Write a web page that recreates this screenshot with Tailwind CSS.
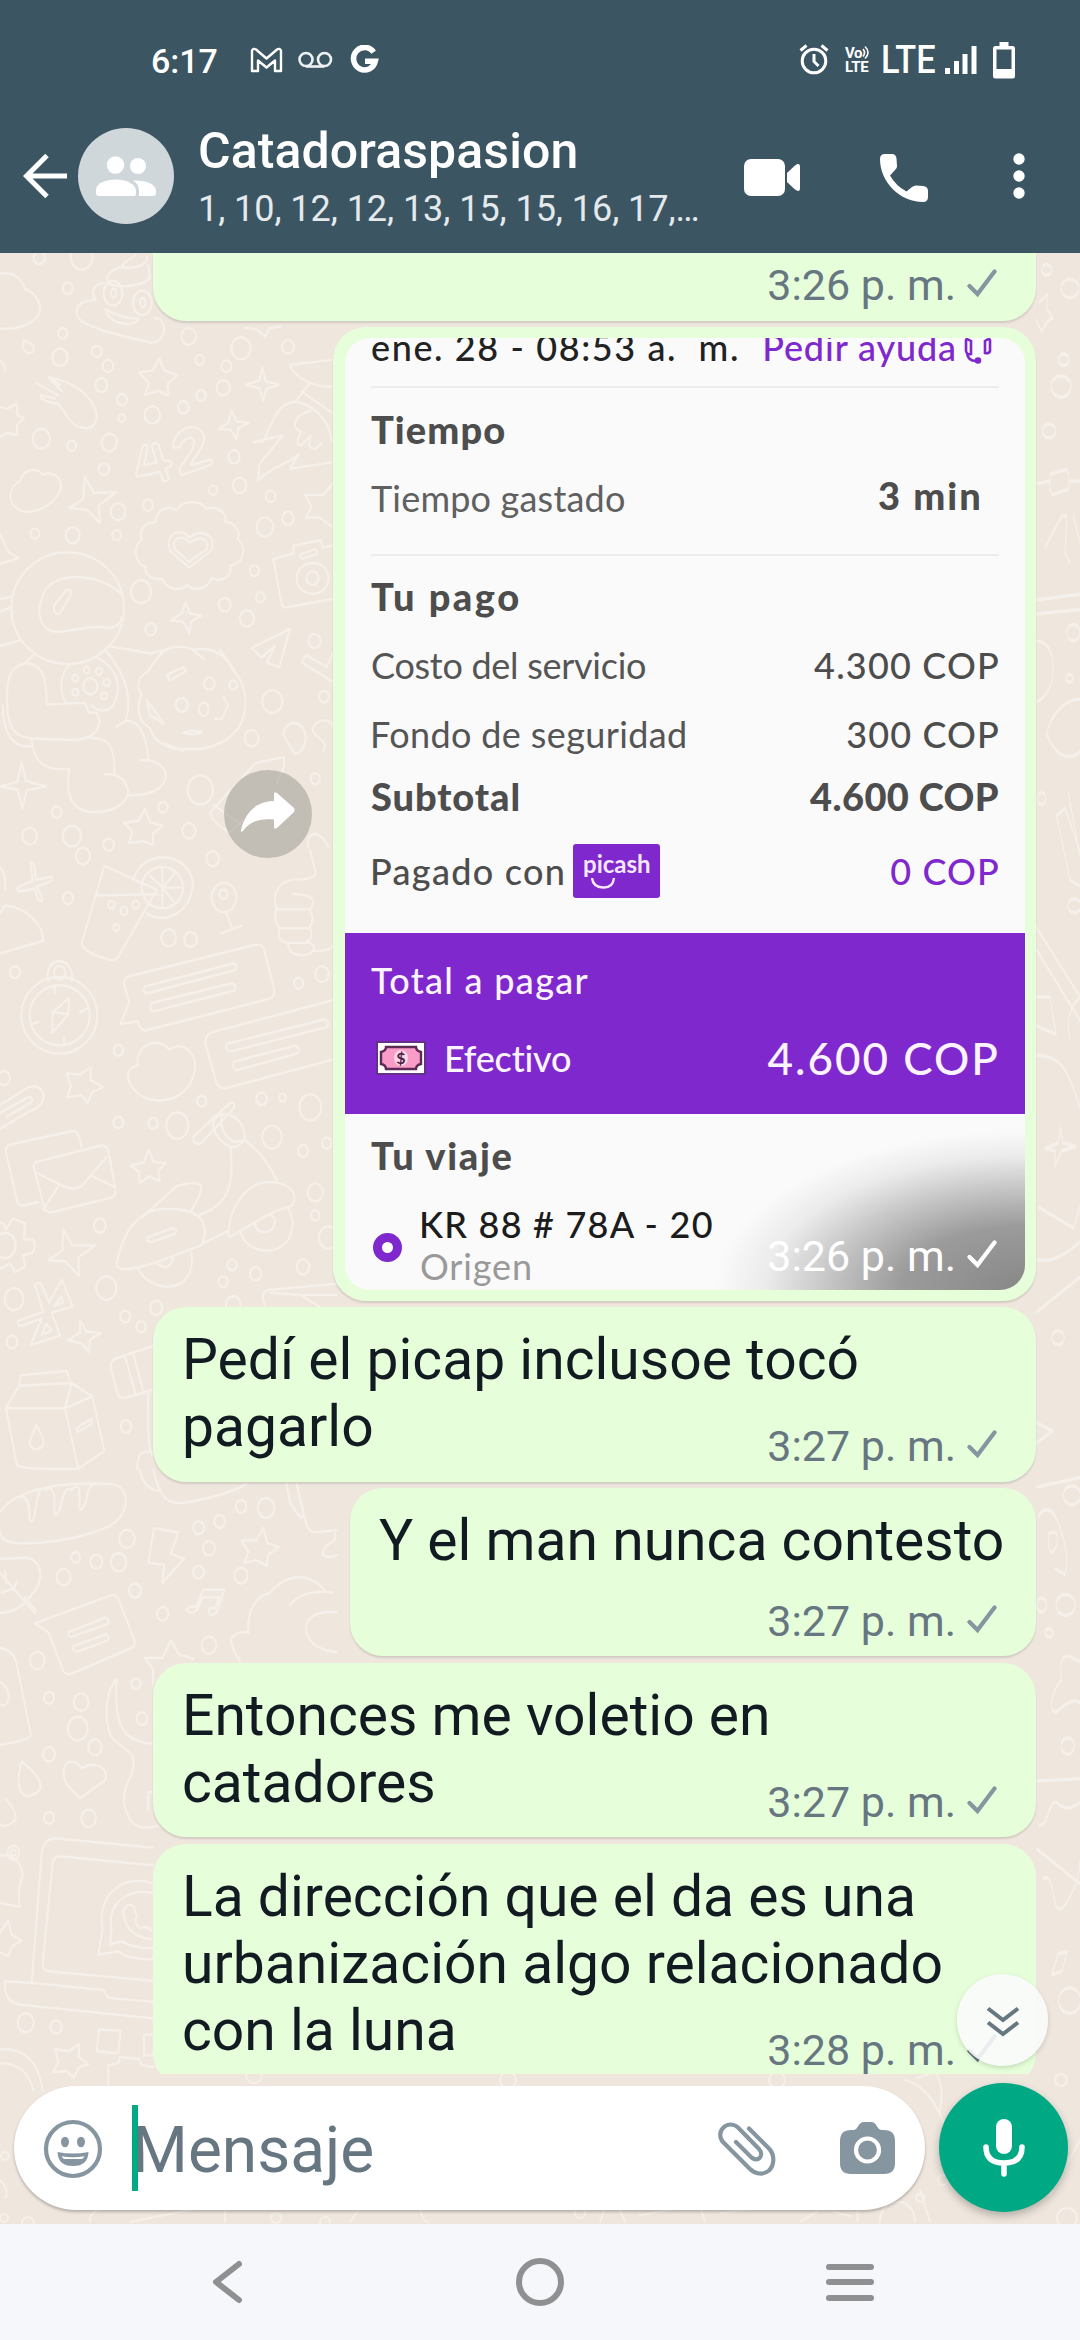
<!DOCTYPE html>
<html lang="es">
<head>
<meta charset="utf-8">
<title>Catadoraspasion</title>
<script src="https://cdn.jsdelivr.net/npm/@tailwindcss/browser@4"></script>
</head>
<body class="w-[1080px] h-[2340px] overflow-hidden bg-[#efe7de] font-[Roboto,sans-serif]">
<svg width="0" height="0" class="absolute">
  <defs>
    <symbol id="check" viewBox="0 0 30 30"><path d="M2.500 18 L10.500 26 L27.500 3.500" fill="none" stroke="currentColor" stroke-width="4.200" stroke-linecap="round"/></symbol>
  </defs>
</svg>
<div class="flex flex-col w-[1080px] h-[2340px]">

  <!-- header -->
  <header class="h-[253px] shrink-0 bg-[#3b5563] text-white">
    <div class="flex items-center h-[122px]">
      <span class="ml-[151px] w-[99px] text-[34px] font-medium leading-none">6:17</span>
      <svg class="w-[33px] h-[26px] mt-[-3px]" viewBox="0 0 33 26" fill="none" stroke="#fff" stroke-width="2.400" stroke-linejoin="round"><path d="M2 24V3.500Q3.500 .800 6 2.500L16.500 11.500 27 2.500Q29.500 .800 31 3.500V24H25V13.500L16.500 20.500 8 13.500V24Z"/></svg>
      <svg class="ml-[15px] w-[35px] h-[18px] mt-[-3px]" viewBox="0 0 35 18" fill="none" stroke="#eef1f3" stroke-width="2.600"><circle cx="8" cy="8.500" r="6.500"/><circle cx="26.500" cy="8.500" r="6.500"/><path d="M8 15.500H26.500"/></svg>
      <svg class="ml-[17px] w-[29px] h-[30px] mt-[-2px]" viewBox="0 0 29 30" fill="none" stroke="#fff" stroke-width="5.600"><path d="M23.600 7.200A11 11.300 0 1 0 25.300 16.200H15"/></svg>
      <div class="flex items-center ml-auto mr-[65px]">
        <svg class="w-[30px] h-[32px] mt-[-4px]" viewBox="0 0 30 32" fill="none" stroke="#fff" stroke-width="3"><circle cx="15" cy="18" r="11.800"/><path d="M15 11V18.500L19.500 23M1.500 7.500L7.500 2.500M28.500 7.500L22.500 2.500"/></svg>
        <div class="flex flex-col ml-[16px] w-[28px] mt-[-3px] font-bold text-[15px] leading-[14px]">
          <span class="flex items-center"><span class="tracking-[-0.500px]">Vo</span><svg class="w-[9px] h-[15px]" viewBox="0 0 9 15" fill="none" stroke="#fff" stroke-width="1.600"><path d="M1 4Q4 7.500 1 11.500M3 1.500Q9 7.500 3 13.500"/></svg></span>
          <span class="tracking-[-0.200px]">LTE</span>
        </div>
        <div class="ml-[8px] w-[64px] mt-[-2px]"><span class="inline-block origin-left scale-x-[0.88] text-[39px] leading-[39px] font-medium">LTE</span></div>
        <svg class="w-[32px] h-[28px] mt-[-2px]" viewBox="0 0 32 28" fill="#fff"><path d="M0 22h5v6H0zM9 15h5v13H9zM17.500 8h5v20h-5zM26.500 0h5v28h-5z"/></svg>
        <svg class="ml-[16px] w-[22px] h-[37px] mt-[-2px]" viewBox="0 0 22 37"><path d="M6.500 0h9v4H19.500Q22 4 22 6.500V34Q22 36.500 19.500 36.500H2.500Q0 36.500 0 34V6.500Q0 4 2.500 4H6.500ZM3.500 7.500V27H18.500V7.500Z" fill="#fff" fill-rule="evenodd"/></svg>
      </div>
    </div>
    <div class="flex items-center h-[131px] pb-[23px]">
      <svg class="ml-[23px] w-[45px] h-[46px]" viewBox="0 0 45 46" fill="none" stroke="#fff" stroke-width="5"><path d="M24 2.500L3.500 23 24 43.500M3.500 23H44"/></svg>
      <div class="ml-[10px] w-[96px] h-[96px] rounded-full bg-[#d0d7db] flex items-center justify-center">
        <svg class="w-[60px] h-[40px]" viewBox="0 0 60 40" fill="#fff"><circle cx="19.500" cy="9" r="8.700"/><circle cx="42" cy="10" r="8"/><path d="M0 34C0 27 10 23.500 20 23.500S40 28 40 35V38Q40 40 38 40H3Q0 40 0 37Z"/><path d="M37 24.500C50 24 60 28 60 34.500V37Q60 40 57 40H43V35Q43 28 37 24.500Z"/></svg>
      </div>
      <div class="ml-[24px] mt-[6px] w-[546px] flex flex-col whitespace-nowrap">
        <span class="text-[50px] font-medium leading-[60px] tracking-[0.100px]">Catadoraspasion</span>
        <span class="text-[36px] leading-[56px] text-[#e4e9ec] tracking-[-0.050px]">1, 10, 12, 12, 13, 15, 15, 16, 17,…</span>
      </div>
      <svg class="w-[56px] h-[37px] mt-[2px]" viewBox="0 0 56 37" fill="#fff"><rect width="41" height="37" rx="7"/><path d="M43 14L51 6.500Q56 3 56 8V29Q56 34 51 30.500L43 23Z"/></svg>
      <svg class="ml-[80px] w-[48px] h-[48px] mt-[4px]" viewBox="0 0 48 48" fill="#fff"><path d="M5 0H12Q16 0 16.500 4.500L17 12Q17 14 15.500 15.500L10 21.500Q16 32 26.500 37.500L32 33Q34 31.500 36 31.500L43 32Q48 32.500 48 37V43Q48 48 43 48C20 48 0 28 0 5Q0 0 5 0Z"/></svg>
      <svg class="ml-[85px] w-[12px] h-[46px]" viewBox="0 0 12 46" fill="#fff"><circle cx="6" cy="6" r="5.700"/><circle cx="6" cy="23" r="5.700"/><circle cx="6" cy="40" r="5.700"/></svg>
    </div>
  </header>

  <!-- chat -->
  <main class="relative h-[1971px] shrink-0 overflow-hidden">
    <!-- wallpaper doodles -->
    <svg class="absolute left-0 top-0 w-[1080px] h-[1971px]" viewBox="0 253 1080 1971" fill="none" stroke="#f6f0ea" stroke-width="2" stroke-linejoin="round" stroke-linecap="round">
      <g transform="translate(0,250) scale(.3333,.38265)" stroke-width="6">
        <path d="M0 62C40 55 65 75 75 102C110 110 130 150 115 170C95 195 50 210 0 205M0 290Q18 300 14 318"/>
        <path d="M365 45C370 25 400 25 405 12M365 45C400 50 450 40 440 15M365 45C330 50 315 70 325 88C355 100 440 95 450 70L445 40M312 86C280 90 270 110 287 132C240 130 225 150 232 172C245 205 400 230 450 242C490 245 505 200 480 180L465 178M316 155C345 170 380 180 416 180C410 200 330 200 316 155Z"/>
        <ellipse cx="339" cy="113" rx="28" ry="32"/><ellipse cx="427" cy="138" rx="28" ry="32"/><ellipse cx="341" cy="113" rx="8" ry="12"/><ellipse cx="428" cy="137" rx="8" ry="12"/>
        <path d="M70 236Q110 245 99 266Q82 276 70 258Z"/>
        <path d="M145 332C230 345 290 390 290 440C280 480 235 465 215 450L175 402Q120 395 122 380L165 388M145 332L185 368M110 348L175 380M145 332L180 352"/>
        <path d="M478 283L493 315 532 327 503 350 505 380 475 368 435 378 447 348 417 320 458 315ZM0 410L20 415 50 402 52 432 72 440 50 458 52 483 20 478 0 488M735 203L770 207 795 228 808 205 842 200"/>
        <path d="M787 308L797 343 838 352 800 362 789 394 779 362 737 352 777 342ZM695 420L710 448 745 452 715 465 710 494 692 470 655 468 685 452ZM254 592L282 635 348 633 296 668 300 714 262 680 208 674 250 650Z"/>
        <path d="M428 512Q440 505 443 515L432 562 470 555 455 510Q465 500 475 508L490 550 515 552Q520 565 496 572L507 598Q500 608 490 603L480 580 415 592Q405 592 410 580ZM520 517C515 470 590 440 612 485C618 515 580 540 572 562L630 548Q645 552 632 562L545 588Q538 585 540 570C560 540 585 520 583 500C575 480 545 495 540 515Z"/>
        <path d="M60 605C65 575 110 565 127 587C170 575 190 605 180 630C160 670 90 700 50 675C20 655 30 615 60 605Z"/>
        <path d="M468 712C465 680 505 665 530 680C550 650 605 655 620 677C650 665 685 690 675 710C705 710 725 740 712 755C740 775 735 820 690 825C700 855 660 870 635 857C625 885 580 895 563 875C540 895 495 885 487 858C465 865 430 850 438 828C400 820 400 770 425 757C415 725 440 710 468 712Z"/>
        <path d="M567 830L512 788C490 745 540 720 570 752C600 725 655 745 632 787ZM567 815L525 782C510 755 545 740 570 765C600 745 630 755 620 782Z"/>
        <path d="M870 300L998 287M870 300C880 330 940 360 998 357M930 347L885 397C840 400 825 430 790 500L760 502L848 485L778 560L775 602C820 560 870 560 897 532L870 572L995 555M885 397C930 400 990 440 995 500M905 370L995 425M930 420C880 435 870 465 905 475Q880 510 905 510L932 485Q920 520 945 520L965 505"/>
        <path d="M998 610L970 640 915 640 935 672 917 700 955 698 995 722M820 808L882 792 880 773 962 758 970 778 998 772M820 808L845 925Q848 935 860 934L998 912M902 795L945 782Q955 785 950 795L910 806Q900 806 902 795Z"/><ellipse cx="938" cy="858" rx="48" ry="40"/><circle cx="938" cy="858" r="18"/>
        <ellipse cx="203" cy="936" rx="169" ry="146"/>
        <path d="M365 900C300 840 150 840 130 900C105 950 120 1000 180 998C250 990 280 980 330 988Q365 980 363 960M200 888Q220 885 210 905L180 950Q160 955 162 930Z"/>
        <path d="M100 1058L75 1080C15 1090 20 1150 22 1200C30 1290 80 1275 220 1280C290 1280 310 1240 290 1210L265 1208 255 1183 140 1188C140 1120 130 1080 75 1080M0 1035L60 1020M315 1045C370 1100 400 1160 378 1230L350 1246M328 1035L450 1054 500 1045M8 1190Q10 1300 90 1298M95 1280C100 1350 150 1360 208 1357C190 1450 240 1475 300 1468C360 1465 395 1430 380 1400C370 1380 350 1368 315 1370M343 1368C345 1290 320 1275 270 1275M378 1230C430 1230 440 1290 445 1330M420 1333C480 1330 505 1360 495 1385C480 1420 430 1425 386 1425"/>
        <path d="M208 1085C170 1120 185 1170 200 1185M290 1065C350 1090 370 1140 340 1190C320 1210 290 1205 275 1190"/><circle cx="271" cy="1140" r="21"/><circle cx="226" cy="1119" r="9"/><circle cx="260" cy="1097" r="9"/><circle cx="297" cy="1101" r="9"/><circle cx="320" cy="1130" r="9"/><circle cx="312" cy="1165" r="9"/><circle cx="226" cy="1156" r="9"/>
        <path d="M480 1058C500 1030 560 1035 580 1045C640 1035 680 1060 700 1100C740 1130 750 1200 715 1250C680 1290 620 1310 560 1303C500 1310 460 1280 450 1250C410 1230 410 1190 425 1160C405 1140 420 1110 440 1105ZM500 1110L550 1090 558 1100 510 1125ZM578 1045L612 1070M660 1045L705 1100M440 1175L492 1238 450 1215ZM495 1290L550 1310M628 1300L680 1280M550 1262Q580 1252 605 1260Q580 1270 550 1262ZM670 1168L685 1190 665 1225 645 1225"/><circle cx="628" cy="1133" r="16"/><circle cx="700" cy="1137" r="12"/><circle cx="545" cy="1189" r="18"/><ellipse cx="611" cy="1200" rx="14" ry="18"/>
        <path d="M755 1040L870 990 838 1090 800 1078 825 1035 785 1065ZM905 1078L918 1058 980 1090 998 1055M905 1078L998 1128"/>
        <path d="M885 1318C870 1290 850 1275 850 1265C855 1225 915 1225 917 1275Q915 1310 885 1318ZM970 1310C990 1280 940 1275 938 1255C945 1220 998 1225 998 1245"/>
        <path d="M770 1340L852 1325 852 1350 830 1395M768 1340L630 1470Q640 1500 690 1522L730 1490M640 1450L720 1500"/>
        <path d="M65 1338L78 1388 138 1402 80 1412 67 1460 53 1410 0 1402 52 1390ZM435 1460L450 1495 488 1505 458 1525 460 1555 430 1545 387 1550 397 1520 372 1497 415 1492ZM0 742L25 790 55 805 0 820M0 912L30 908M0 945L28 935M925 1560C915 1520 960 1510 985 1560"/>
        <circle cx="118" cy="20" r="17"/><circle cx="245" cy="18" r="33"/><circle cx="203" cy="100" r="15"/><circle cx="188" cy="218" r="14"/><circle cx="180" cy="280" r="23"/><circle cx="290" cy="265" r="15"/><circle cx="324" cy="303" r="16"/><circle cx="304" cy="353" r="18"/><circle cx="366" cy="391" r="15"/><circle cx="365" cy="439" r="10"/><circle cx="457" cy="431" r="23"/><circle cx="550" cy="411" r="16"/><circle cx="603" cy="380" r="14"/><circle cx="670" cy="360" r="20"/><circle cx="679" cy="304" r="15"/><circle cx="599" cy="287" r="13"/><circle cx="723" cy="257" r="29"/><circle cx="566" cy="226" r="22"/><circle cx="864" cy="253" r="18"/><circle cx="124" cy="493" r="26"/><circle cx="215" cy="512" r="13"/><circle cx="328" cy="503" r="23"/><circle cx="312" cy="573" r="16"/><circle cx="702" cy="540" r="17"/><circle cx="719" cy="615" r="20"/><circle cx="639" cy="628" r="12"/><circle cx="444" cy="667" r="15"/><circle cx="354" cy="684" r="22"/><circle cx="218" cy="746" r="21"/><circle cx="105" cy="741" r="13"/><circle cx="350" cy="745" r="13"/><circle cx="812" cy="644" r="15"/><circle cx="864" cy="701" r="17"/><circle cx="795" cy="724" r="25"/><circle cx="763" cy="838" r="14"/><circle cx="781" cy="908" r="13"/><circle cx="674" cy="927" r="18"/><circle cx="741" cy="963" r="21"/><circle cx="423" cy="893" r="30"/><circle cx="452" cy="991" r="16"/><circle cx="944" cy="1022" r="18"/><circle cx="817" cy="1180" r="30"/><circle cx="972" cy="1167" r="15"/><circle cx="755" cy="1276" r="21"/><circle cx="601" cy="1411" r="38"/><circle cx="567" cy="1518" r="20"/><circle cx="489" cy="1456" r="14"/><circle cx="170" cy="1469" r="15"/><circle cx="89" cy="1532" r="22"/><circle cx="216" cy="1532" r="27"/><circle cx="946" cy="1382" r="14"/><circle cx="326" cy="1554" r="16"/>
        <path d="M557 920L570 950 605 955 574 970 568 1000 550 972 512 968 545 950Z"/>
      </g>
      <g transform="translate(0,850) scale(.3333,.3954)" stroke-width="6">
        <path d="M92 30Q105 28 107 75L155 68Q170 78 110 92L128 125Q115 140 105 98L55 105Q40 95 98 78ZM0 262L130 230C130 190 80 145 15 140L0 160M0 45Q20 60 15 100"/>
        <path d="M313 40L470 100 355 270Q345 282 330 278Q250 260 245 235ZM287 115L475 112M402 70C430 0 560 0 578 80C580 160 490 190 440 160"/><ellipse cx="487" cy="95" rx="62" ry="52"/><path d="M487 95V45M487 95L525 60M487 95L545 95M487 95L525 135M487 95V145M487 95L450 65"/>
        <circle cx="672" cy="120" r="37"/><circle cx="670" cy="112" r="12"/><path d="M678 157L697 200M664 210L725 192"/>
        <path d="M930 0L948 60Q940 75 880 75C830 80 815 120 830 145C820 180 830 190 838 195C830 230 850 235 865 235C860 270 920 275 940 255Q998 255 998 240M880 112C940 110 950 130 930 150C940 170 940 185 930 195C940 220 930 230 920 232Q950 240 940 255M830 150H930M838 198H930M865 235H920"/>
        <path d="M388 385L372 340Q370 325 385 320L765 240Q785 238 792 250L823 355Q825 370 810 376L435 457Q420 455 413 433L362 440Z"/><path d="M435 345L700 287Q715 290 708 303L440 363Q425 360 435 345ZM455 387L695 337Q712 342 705 355L460 408Q445 405 455 387Z"/>
        <path d="M998 380L640 460Q615 465 616 490L650 590Q660 605 680 602L998 530M680 490L975 428Q992 435 980 448L690 510Q675 508 680 490ZM702 535L885 495Q905 502 890 515L710 557Q695 555 702 535Z"/>
        <ellipse cx="178" cy="418" rx="114" ry="97"/><ellipse cx="179" cy="418" rx="90" ry="76"/><circle cx="179" cy="310" r="17"/><path d="M145 330C130 265 225 265 215 330M207 375L205 415 157 462 158 410ZM158 410L205 415M164 345V362M192 490V475M95 440L115 435M260 402L240 410"/>
        <path d="M415 545C400 500 470 465 508 505C550 480 590 515 585 550C580 610 520 640 460 632C390 625 355 550 415 545Z"/>
        <path d="M272 550V582L310 600 277 612 263 640 245 620 202 625 213 597 200 565 240 568ZM446 758L460 788 497 792 475 812 480 838 448 825 418 842 418 815 392 798 432 790Z"/>
        <path d="M0 645L85 600Q120 590 132 620Q130 650 90 660L0 705M0 665L85 625Q100 625 95 637L20 675"/>
        <path d="M245 750L235 720Q228 708 210 712L30 745Q15 750 18 765L52 890Q58 902 75 898L115 890M105 790L300 748Q318 745 325 760L347 860Q348 875 332 880L160 915Q140 920 133 905L102 805Q100 795 105 790ZM105 815L190 850Q220 862 245 850L322 775M175 850L130 910M278 825L342 852"/>
        <path d="M580 725L690 640Q710 635 700 655L605 740Q580 750 580 725ZM690 750C640 730 620 680 665 668C715 665 745 710 730 735Q715 755 690 750ZM722 735C690 750 650 700 668 670M692 755C705 850 680 900 600 922M735 735Q790 765 830 835M425 930L530 850Q590 835 605 850Q600 880 575 910M350 1045C370 960 420 905 500 908C610 905 630 950 605 1000C530 1020 440 1060 370 1060Q350 1058 350 1045ZM443 980L515 957Q535 958 525 970L455 992Q437 990 443 980ZM415 1060C450 1120 590 1130 575 1018M470 1045Q510 1070 520 1030M605 997L685 963M685 970C690 900 740 835 820 840C880 845 895 880 875 900C820 910 750 950 690 978ZM722 967C740 1020 830 1030 865 985C885 950 880 930 865 905M765 945C770 980 830 970 825 935Q815 915 800 925"/>
        <path d="M0 940Q15 945 18 960L38 932 75 945 72 985 100 985Q110 1010 95 1020L70 1025 75 1055 45 1067 30 1045 0 1060"/><circle cx="15" cy="1000" r="32"/><path d="M190 960L217 1000 285 1000 235 1030 237 1077 195 1040 145 1038 187 1012ZM240 1190L260 1218 303 1222 270 1238 267 1270 245 1248 205 1240 240 1220Z"/>
        <path d="M105 1100Q115 1090 125 1100L147 1145 185 1087 218 1155 155 1170 180 1228 92 1252 125 1185 60 1205Q50 1200 55 1190L130 1168ZM165 1152L183 1130 190 1145ZM125 1226L140 1198 155 1215Z"/>
        <path d="M58 1350L62 1328 200 1318 213 1348 58 1355 18 1410 50 1555Q60 1568 235 1565L313 1520 277 1382 215 1348 195 1412 235 1565M18 1412H195L277 1382M108 1455Q135 1490 130 1505Q105 1530 88 1500ZM230 1462L275 1438V1452L232 1472ZM458 1255L350 1285Q325 1295 335 1320L355 1380Q365 1388 380 1385L458 1365M375 1280L408 1380M400 1275L432 1375M445 1370Q440 1500 455 1530M412 1568C410 1525 430 1515 460 1525"/>
        <path d="M1010 1097L800 1113Q780 1125 795 1150M810 1120L900 1125Q930 1140 960 1155M900 1125L1010 1125"/>
        <circle cx="249" cy="15" r="21"/><circle cx="204" cy="122" r="15"/><circle cx="334" cy="138" r="10"/><circle cx="372" cy="154" r="10"/><circle cx="407" cy="138" r="10"/><circle cx="349" cy="196" r="9"/><circle cx="506" cy="222" r="22"/><circle cx="572" cy="226" r="19"/><circle cx="638" cy="22" r="19"/><circle cx="45" cy="309" r="15"/><circle cx="966" cy="314" r="20"/><circle cx="896" cy="337" r="14"/><circle cx="355" cy="506" r="14"/><circle cx="12" cy="577" r="18"/><circle cx="605" cy="635" r="14"/><circle cx="785" cy="629" r="16"/><circle cx="848" cy="626" r="10"/><circle cx="931" cy="651" r="33"/><circle cx="532" cy="697" r="33"/><circle cx="459" cy="691" r="14"/><circle cx="355" cy="689" r="15"/><circle cx="816" cy="726" r="29"/><circle cx="909" cy="761" r="15"/><circle cx="980" cy="741" r="14"/><circle cx="946" cy="866" r="23"/><circle cx="946" cy="924" r="13"/><circle cx="299" cy="950" r="18"/><circle cx="319" cy="1108" r="30"/><circle cx="42" cy="1136" r="28"/><circle cx="36" cy="1244" r="16"/><circle cx="376" cy="1180" r="15"/><circle cx="423" cy="1206" r="14"/><circle cx="469" cy="1158" r="18"/><circle cx="696" cy="1049" r="14"/><circle cx="767" cy="1072" r="17"/><circle cx="669" cy="1092" r="14"/><circle cx="909" cy="1054" r="19"/><circle cx="378" cy="1458" r="16"/><circle cx="985" cy="980" r="28"/><circle cx="700" cy="1150" r="22"/>
      </g>
      <g transform="translate(0,1470) scale(.3333,.3954)" stroke-width="6">
        <path d="M0 105C60 40 200 30 330 35C400 40 390 120 320 145C220 180 100 190 30 183Q0 175 0 155M55 68Q90 60 88 120Q95 145 105 110Q115 30 138 50Q170 35 162 105Q170 130 185 80Q195 40 215 50Q245 20 238 90Q240 115 258 80Q265 30 290 35"/>
        <path d="M0 225L80 222C130 230 130 280 100 310Q60 360 0 362M0 260L105 362M75 322L108 355M15 255L20 285M50 280L42 300M5 310L40 300"/>
        <path d="M105 388L330 318Q345 312 355 325L403 430Q407 445 395 450L215 515Q195 520 188 505L145 410ZM205 410L318 373Q332 380 322 390L215 422Q202 420 205 410ZM222 445L318 416Q332 422 322 432L230 460Q215 458 222 445Z"/>
        <path d="M462 147L535 158 512 212 552 225 487 285 493 240 445 235ZM790 147L802 185 837 195 805 215 800 242 768 228 733 235 745 207 725 178 768 178ZM513 430L535 465 580 478M513 430L488 475 435 475 460 505 458 540"/>
        <path d="M610 303H673L650 360Q630 375 625 355Q632 345 645 350L658 322H608L590 355Q570 368 560 352Q572 340 588 347Z"/>
        <path d="M720 485Q680 430 700 420Q720 405 745 412C740 350 770 320 810 310C850 270 920 250 975 305M870 342Q905 300 1000 310M1010 360C900 350 900 420 950 445Q980 460 1010 460M860 35L870 80Q880 100 905 122Q915 110 905 90L890 35M905 90L920 140Q930 158 950 157L1010 152M1005 160Q1010 180 990 185Q965 195 970 215Q990 225 1010 215M420 0Q430 50 478 52M460 0C480 70 500 90 560 82C640 70 700 55 740 35"/>
        <path d="M350 530C310 560 310 660 345 685C400 720 410 720 395 770C360 820 370 860 395 890C420 910 450 905 475 900M350 530C345 600 350 660 400 680Q430 692 460 692M445 860V815H460"/>
        <path d="M240 830L200 795C170 740 220 720 245 755C280 735 330 750 315 785ZM65 738Q130 780 120 808Q80 840 60 810Q50 780 65 738ZM18 832Q55 870 45 885Q15 910 0 895M0 450Q40 455 50 490L93 670Q95 682 0 695M0 535C30 550 40 600 0 595M0 975Q60 970 68 1025Q50 1070 60 1105L0 1095"/><circle cx="40" cy="968" r="18"/><circle cx="40" cy="968" r="8"/>
        <path d="M460 955L170 932Q130 930 125 970L95 1297M460 1000L180 977Q160 978 158 995L128 1250Q128 1268 150 1268L460 1292M95 1297L15 1293Q10 1345 60 1352L460 1387M95 1297L310 1315 325 1335 460 1345"/>
        <path d="M460 1045C360 1020 290 1080 308 1160L295 1225 355 1218Q390 1240 460 1237M460 1070C380 1055 320 1100 335 1160L330 1200 365 1192Q400 1210 460 1210M370 1115Q385 1090 402 1105L410 1130Q400 1145 420 1160Q440 1150 455 1165M370 1115Q375 1180 455 1187"/>
        <path d="M0 1170L25 1140 35 1175 65 1190 35 1205 25 1230 0 1220M237 1452V1485L265 1503 237 1510 222 1537 200 1520 160 1523 175 1497 165 1465 205 1470ZM297 1415L362 1418 355 1475 290 1470ZM460 1428H432V1480H460M325 1568V1505L355 1500 360 1485 418 1490 425 1505 460 1510M0 1465Q110 1460 128 1568M0 1500Q80 1500 100 1568"/>
        <circle cx="381" cy="174" r="23"/><circle cx="356" cy="233" r="23"/><circle cx="289" cy="232" r="18"/><circle cx="227" cy="221" r="13"/><circle cx="191" cy="271" r="21"/><circle cx="405" cy="305" r="18"/><circle cx="488" cy="364" r="17"/><circle cx="596" cy="146" r="16"/><circle cx="659" cy="130" r="16"/><circle cx="723" cy="92" r="16"/><circle cx="798" cy="96" r="25"/><circle cx="627" cy="198" r="18"/><circle cx="596" cy="258" r="16"/><circle cx="723" cy="267" r="20"/><circle cx="627" cy="443" r="22"/><circle cx="112" cy="482" r="22"/><circle cx="147" cy="576" r="15"/><circle cx="243" cy="587" r="22"/><circle cx="233" cy="654" r="30"/><circle cx="285" cy="701" r="20"/><circle cx="147" cy="719" r="18"/><circle cx="147" cy="880" r="15"/><circle cx="266" cy="881" r="22"/><circle cx="408" cy="540" r="14"/><circle cx="426" cy="629" r="16"/><circle cx="77" cy="1398" r="24"/><circle cx="168" cy="1409" r="17"/>
      </g>
      <!-- right edge -->
      <g transform="translate(1030,250) scale(.3333,1.167)" stroke-width="3">
        <path d="M18 60L35 70 50 62 68 58 50 50 52 38 28 45M22 200L60 198M62 192L110 188Q122 195 115 205L65 210Q55 203 62 192ZM120 198H150M18 300L150 295M18 312L150 308M45 255L95 228 110 228 105 260 120 268M130 228L150 250M20 335C60 335 75 350 68 365C60 378 40 385 20 387M150 385C100 385 60 400 50 415C70 430 110 440 150 430M80 485L120 540 150 545M80 485L105 478 150 515M115 465L150 520M18 580L150 640M20 600L150 660M150 640Q100 655 120 675M20 640L60 640 78 672 20 665M20 690C90 690 110 700 150 735M92 752L98 765 138 768 95 772 75 785 75 772 45 770 85 765ZM25 820L130 838 150 820M20 865Q70 870 150 850M20 910L150 880M20 1005L68 1012 20 1022M20 1060L150 1052M25 1085Q60 1070 90 1095Q120 1120 105 1135L75 1130M55 1100Q90 1095 80 1110Q55 1125 55 1100ZM150 1210C100 1200 85 1205 95 1225C50 1240 60 1260 90 1250Q130 1240 150 1245M20 1312L150 1310M20 1370L150 1400M28 1350C60 1350 50 1330 80 1330Q110 1340 150 1330M65 1478L85 1460 112 1458 95 1475ZM40 1395C80 1390 60 1430 100 1420Q150 1400 150 1380"/>
        <ellipse cx="50" cy="17" rx="15" ry="4.500"/><ellipse cx="120" cy="33" rx="27" ry="8"/><ellipse cx="101" cy="94" rx="16" ry="5"/><ellipse cx="93" cy="117" rx="30" ry="9"/><ellipse cx="57" cy="155" rx="20" ry="6"/><ellipse cx="130" cy="328" rx="20" ry="7"/><ellipse cx="118" cy="367" rx="11" ry="3.500"/><ellipse cx="133" cy="562" rx="20" ry="6"/><ellipse cx="84" cy="932" rx="19" ry="6"/><ellipse cx="126" cy="1067" rx="26" ry="8"/><ellipse cx="107" cy="1161" rx="29" ry="9"/><ellipse cx="35" cy="1161" rx="15" ry="6"/><ellipse cx="57" cy="1185" rx="12" ry="3.500"/><ellipse cx="113" cy="1282" rx="20" ry="7"/><ellipse cx="119" cy="1500" rx="33" ry="11"/><ellipse cx="35" cy="470" rx="13" ry="5"/>
      </g>
      <!-- bottom edge -->
      <g stroke-width="2">
        <path d="M90 2222Q88 2210 110 2207L195 2197Q210 2200 205 2207L130 2222M225 2222V2210M0 2180Q10 2190 5 2198M350 2222L360 2208M420 2205Q422 2222 428 2222M600 2222L605 2208 618 2206 625 2222M640 2215L675 2209M705 2222L700 2206M720 2213L760 2208M800 2222L815 2213 825 2202 835 2212 850 2216M858 2222L857 2208M905 2080C925 2085 945 2110 950 2150M917 2078L935 2072Q945 2085 940 2110M1050 2195L1080 2140M880 2222C880 2195 915 2195 915 2222M920 2190L930 2222"/>
        <circle cx="276" cy="2218" r="5"/><circle cx="325" cy="2222" r="5"/><circle cx="4" cy="2218" r="4"/><circle cx="28" cy="2223" r="6"/><circle cx="5" cy="2156" r="4"/><circle cx="580" cy="2213" r="5"/><circle cx="1061" cy="2080" r="6"/><circle cx="1067" cy="2218" r="10"/><circle cx="254" cy="2075" r="8"/><circle cx="777" cy="2080" r="8"/><circle cx="920" cy="2198" r="4"/><circle cx="943" cy="2180" r="5"/><circle cx="508" cy="2080" r="8"/>
      </g>
    </svg>

    <!-- messages -->
    <div class="relative h-[1821px] overflow-hidden pr-[44px] flex flex-col items-end text-[#111b21]">
      <div class="shrink-0 w-[883px] h-[68px] bg-[#e6ffda] rounded-b-[33px] shadow-[0_2px_2px_rgba(0,0,0,0.12)] flex items-start justify-end pr-[39px] pt-[7px] text-[#667781]">
        <span class="text-[43px] leading-[50px] mr-[11px]">3:26 p. m.</span><svg class="w-[30px] h-[30px] mt-[8px] text-[#8696a0]"><use href="#check"/></svg>
      </div>

      <div class="relative shrink-0 mt-[6px] w-[703px] h-[974px] bg-[#e6ffda] rounded-[33px] shadow-[0_2px_2px_rgba(0,0,0,0.12)] pt-[11px] pl-[12px]">
        <!-- shared receipt -->
        <div class="relative w-[680px] h-[952px] rounded-[25px] bg-[#fafafa] overflow-hidden flex flex-col font-[Lato,sans-serif] text-[36px] leading-none text-[#4d4d4d] whitespace-pre">
          <div class="flex items-center h-[18px] shrink-0 pl-[26px] pr-[32px] text-[#222]">
            <span class="font-medium tracking-[1.600px]">ene. 28 - 08:53 a.  m.</span>
            <span class="ml-auto font-medium tracking-[0.900px] text-[#7e28ce]">Pedir ayuda</span>
            <svg class="ml-[6px] w-[30px] h-[40px] mt-[-2px]" viewBox="0 0 30 40" fill="none" stroke="#7e28ce" stroke-width="2.600"><path d="M3 14V25Q4 29 8 28V15Q3 12 3 14ZM27 14V25Q26 28 22 27V15Q26 12 27 14ZM4 27Q5 35 13 35"/><circle cx="15" cy="34.500" r="2" fill="#7e28ce"/></svg>
          </div>
          <div class="shrink-0 mt-[30px] mx-[26px] h-[2px] bg-[#ededed]"></div>
          <div class="flex items-center h-[82px] shrink-0 pl-[26px] text-[38px] font-black tracking-[1.100px]">Tiempo</div>
          <div class="flex items-center justify-between h-[58px] mt-[-1px] shrink-0 pl-[26px] pr-[42px]"><span class="tracking-[0.200px] text-[#606060]">Tiempo gastado</span><span class="text-[38px] font-black tracking-[2.100px] mt-[-6px]">3 min</span></div>
          <div class="shrink-0 mt-[27px] mx-[26px] h-[2px] bg-[#ededed]"></div>
          <div class="flex items-center h-[80px] shrink-0 pl-[26px] text-[38px] font-black tracking-[2.500px]">Tu pago</div>
          <div class="flex items-center justify-between h-[60px] mt-[-1px] shrink-0 pl-[26px] pr-[25px]"><span class="tracking-[-0.280px] text-[#555]">Costo del servicio</span><span class="tracking-[1.180px] font-medium">4.300 COP</span></div>
          <div class="flex items-center justify-between h-[70px] mt-[4px] shrink-0 pl-[25px] pr-[25px]"><span class="tracking-[0.370px] text-[#555]">Fondo de seguridad</span><span class="tracking-[1.130px] font-medium">300 COP</span></div>
          <div class="flex items-center justify-between h-[54px] shrink-0 pl-[26px] pr-[26px] text-[38px] font-black"><span class="tracking-[0.900px]">Subtotal</span><span class="tracking-[0.400px]">4.600 COP</span></div>
          <div class="flex items-center h-[96px] shrink-0 pl-[25px] pr-[25px]">
            <span class="tracking-[1.300px] font-medium">Pagado con</span>
            <span class="ml-[7px] w-[87px] h-[54px] rounded-[3px] bg-[#7e28ce] text-[#f6e6ff] flex flex-col items-center">
              <span class="text-[24px] leading-[24px] font-bold mt-[8px]">picash</span>
              <svg class="w-[26px] h-[12px] mr-[27px] mt-[2px]" viewBox="0 0 26 12" fill="none" stroke="#f6e6ff" stroke-width="2.400"><path d="M2 0Q3 9 13 9.500T24 0"/></svg>
            </span>
            <span class="ml-auto tracking-[1.140px] font-medium text-[#7e28ce]">0 COP</span>
          </div>
          <div class="shrink-0 mt-[14px] h-[181px] flex flex-col bg-[#7e28ce] text-[#fbf3ff]">
            <div class="flex items-center h-[94px] pl-[26px] font-medium tracking-[1.300px]">Total a pagar</div>
            <div class="flex items-center h-[62px] pl-[31px] pr-[25px]">
              <svg class="w-[50px] h-[34px]" viewBox="0 0 50 34"><rect x="1" y="1" width="48" height="32" fill="#fff" stroke="#64308a" stroke-width="2"/><path d="M10 6H40Q40 10 45 11V23Q40 24 40 28H10Q10 24 5 23V11Q10 10 10 6Z" fill="#f99cc8" stroke="#5b2a55" stroke-width="2.400"/><ellipse cx="25" cy="17" rx="7" ry="8" fill="#ffd5e8"/><text x="25" y="23" text-anchor="middle" font-family="Lato" font-weight="700" font-size="16" fill="#4a1f45">$</text></svg>
              <span class="ml-[18px] tracking-[-0.210px] font-medium">Efectivo</span>
              <span class="ml-auto text-[44px] tracking-[2.030px] font-medium">4.600 COP</span>
            </div>
          </div>
          <div class="flex items-center h-[82px] shrink-0 pl-[26px] text-[38px] font-black tracking-[1.700px]">Tu viaje</div>
          <div class="flex items-center h-[102px] shrink-0 pl-[28px]">
            <span class="w-[29px] h-[29px] rounded-full border-[9px] border-[#7e28ce] bg-white"></span>
            <div class="ml-[17px] h-[102px] flex flex-col">
              <span class="h-[56px] leading-[56px] tracking-[1.230px] font-medium text-[#1c1c1c]">KR 88 # 78A - 20</span>
              <span class="h-[28px] leading-[28px] tracking-[0.870px] text-[#999] pl-[1px]">Origen</span>
            </div>
          </div>
          <div class="absolute right-0 bottom-0 w-[310px] h-[160px] bg-[radial-gradient(ellipse_310px_160px_at_100%_100%,rgba(0,0,0,0.46)_0%,rgba(0,0,0,0.38)_40%,rgba(0,0,0,0.2)_65%,rgba(0,0,0,0.06)_84%,transparent_100%)]"></div>
          <div class="absolute right-[28px] bottom-[9px] flex items-start font-[Roboto,sans-serif] text-white"><span class="text-[43px] leading-[50px] mr-[11px]">3:26 p. m.</span><svg class="w-[30px] h-[30px] mt-[8px]"><use href="#check"/></svg></div>
        </div>
        <!-- forward button -->
        <div class="absolute left-[-109px] top-[443px] w-[88px] h-[88px] rounded-full bg-[#8b8b85]/45 flex items-center justify-center">
          <svg class="w-[54px] h-[40px] mt-[-4px]" viewBox="0 0 54 40" fill="#fff"><path d="M33 2Q33-1 36 1L53 16Q54 18 53 20L36 36Q33 38 33 35V27.500C18 26 8 30 2 39Q-.500 41 0 38C4 20 16 9 33 9Z"/></svg>
        </div>
      </div>

      <div class="shrink-0 mt-[6px] w-[883px] h-[175px] bg-[#e6ffda] rounded-[33px] shadow-[0_2px_2px_rgba(0,0,0,0.12)] pt-[19px] pl-[29px] pr-[39px] flex flex-col">
        <p class="text-[57px] leading-[67px]">Pedí el picap inclusoe tocó<br>pagarlo</p>
        <div class="flex items-start self-end mt-[-39px] text-[#667781]"><span class="text-[43px] leading-[50px] mr-[11px]">3:27 p. m.</span><svg class="w-[30px] h-[30px] mt-[8px] text-[#8696a0]"><use href="#check"/></svg></div>
      </div>

      <div class="shrink-0 mt-[6px] w-[686px] h-[168px] bg-[#e6ffda] rounded-[33px] shadow-[0_2px_2px_rgba(0,0,0,0.12)] pt-[19px] pl-[29px] pr-[39px] flex flex-col">
        <p class="text-[57px] leading-[67px] whitespace-nowrap">Y el man nunca contesto</p>
        <div class="flex items-start self-end mt-[22px] text-[#667781]"><span class="text-[43px] leading-[50px] mr-[11px]">3:27 p. m.</span><svg class="w-[30px] h-[30px] mt-[8px] text-[#8696a0]"><use href="#check"/></svg></div>
      </div>

      <div class="shrink-0 mt-[7px] w-[883px] h-[174px] bg-[#e6ffda] rounded-[33px] shadow-[0_2px_2px_rgba(0,0,0,0.12)] pt-[19px] pl-[29px] pr-[39px] flex flex-col">
        <p class="text-[57px] leading-[67px]">Entonces me voletio en<br>catadores</p>
        <div class="flex items-start self-end mt-[-39px] text-[#667781]"><span class="text-[43px] leading-[50px] mr-[11px]">3:27 p. m.</span><svg class="w-[30px] h-[30px] mt-[8px] text-[#8696a0]"><use href="#check"/></svg></div>
      </div>

      <div class="shrink-0 mt-[7px] w-[883px] h-[242px] bg-[#e6ffda] rounded-[33px] pt-[19px] pl-[29px] pr-[39px] flex flex-col">
        <p class="text-[57px] leading-[67px]">La dirección que el da es una<br>urbanización algo relacionado<br>con la luna</p>
        <div class="flex items-start self-end mt-[-39px] text-[#667781]"><span class="text-[43px] leading-[50px] mr-[11px]">3:28 p. m.</span><svg class="w-[30px] h-[30px] mt-[8px] text-[#667781]"><use href="#check"/></svg></div>
      </div>
    </div>

    <!-- jump to latest -->
    <div class="absolute left-[957px] top-[1721px] w-[91px] h-[92px] rounded-full bg-[#fafbfb]/90 shadow-[0_2px_5px_rgba(0,0,0,0.15)] flex items-center justify-center">
      <svg class="w-[34px] h-[32px] mt-[4px]" viewBox="0 0 34 32" fill="none" stroke="#667781" stroke-width="4"><path d="M2 2.500L17 14 32 2.500M2 16.500L17 28 32 16.500"/></svg>
    </div>

    <!-- composer -->
    <div class="relative flex items-center gap-[14px] pt-[9px] pl-[14px]">
      <div class="flex items-center w-[911px] h-[124px] rounded-full bg-white shadow-[0_2px_3px_rgba(0,0,0,0.25)]">
        <svg class="ml-[29px] w-[60px] h-[60px] mt-[2px]" viewBox="0 0 60 60"><circle cx="30" cy="30" r="27" fill="none" stroke="#8696a0" stroke-width="4.200"/><ellipse cx="22" cy="23" rx="4" ry="5.200" fill="#8696a0"/><ellipse cx="38" cy="23" rx="4" ry="5.200" fill="#8696a0"/><path d="M14.500 33Q30 36 45.500 33Q45 47 30 47T14.500 33ZM18.500 37.200Q19.500 39 21 40H39Q40.500 39 41.500 37.200Q30 39.500 18.500 37.200Z" fill="#8696a0" fill-rule="evenodd"/></svg>
        <span class="relative z-10 ml-[29px] w-[6px] h-[86px] bg-[#00a884]"></span>
        <span class="ml-[-6px] text-[64px] leading-none text-[#667781] mt-[6px]">Mensaje</span>
        <svg class="ml-auto w-[58px] h-[54px] mt-[2px]" viewBox="0 0 58 54" fill="none" stroke="#8696a0" stroke-width="4.200" stroke-linecap="round"><path d="M31 6.500L51 26.500C57 33 56.500 43 51 48.500C45 53.500 37 52 32 47L5 20C1 15.500 1.500 9 5.500 5.500C9.500 1.500 15.500 1.500 20 5.500L41 27C44 30.500 43.500 34 41.500 36C39 38 36 37.500 33.500 35.500L18 20"/></svg>
        <svg class="ml-[64px] mr-[30px] w-[55px] h-[52px]" viewBox="0 0 55 52"><path d="M11 8H14Q16 8 18 4.500Q20 0 24 0H31Q35 0 37 4.500Q39 8 41 8H44Q55 8 55 19V41Q55 52 44 52H11Q0 52 0 41V19Q0 8 11 8Z" fill="#8696a0"/><circle cx="27.500" cy="28" r="11.500" fill="none" stroke="#fff" stroke-width="4.200"/></svg>
      </div>
      <div class="w-[129px] h-[129px] rounded-full bg-[#00a884] shadow-[0_4px_8px_rgba(0,0,0,0.25)] flex items-center justify-center">
        <svg class="w-[42px] h-[58px]" viewBox="0 0 42 58"><rect x="13" y="0" width="16" height="35" rx="8" fill="#fff"/><path d="M3 28Q3 44 21 44T39 28M21 44V55" fill="none" stroke="#fff" stroke-width="5.500" stroke-linecap="round"/></svg>
      </div>
    </div>
  </main>

  <!-- system navigation -->
  <nav class="h-[116px] bg-[#f6f7fa] flex items-center pl-[212px]">
    <svg class="w-[30px] h-[44px]" viewBox="0 0 30 44" fill="none" stroke="#8f9092" stroke-width="6" stroke-linecap="round" stroke-linejoin="round"><path d="M27 4L4 22 27 40"/></svg>
    <span class="ml-[274px] w-[48px] h-[48px] rounded-full border-[6px] border-[#8f9092]"></span>
    <div class="ml-[262px] w-[48px] flex flex-col gap-[9.500px]"><span class="h-[6px] rounded-full bg-[#8f9092]"></span><span class="h-[6px] rounded-full bg-[#8f9092]"></span><span class="h-[6px] rounded-full bg-[#8f9092]"></span></div>
  </nav>
</div>
</body>
</html>
